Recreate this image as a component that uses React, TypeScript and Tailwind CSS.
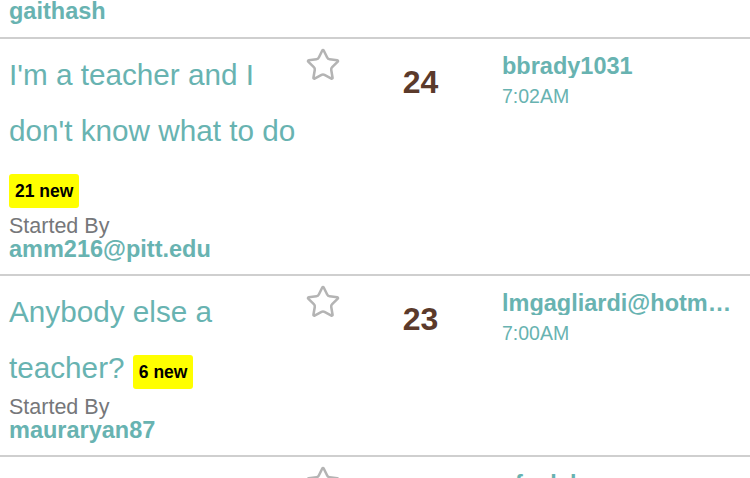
import React from 'react';
import { Star } from 'lucide-react';

type Topic = {
  title: string;
  fresh?: number;
  author: string;
  count?: number;
  lastUser: string;
  time?: string;
};

const topics: Topic[] = [
  {
    title: "I'm a teacher and I don't know what to do",
    fresh: 21,
    author: 'amm216@pitt.edu',
    count: 24,
    lastUser: 'bbrady1031',
    time: '7:02AM',
  },
  {
    title: 'Anybody else a teacher?',
    fresh: 6,
    author: 'mauraryan87',
    count: 23,
    lastUser: 'lmgagliardi@hotmail.com',
    time: '7:00AM',
  },
  {
    title: 'Teaching and working nights',
    author: 'jkline',
    count: 18,
    lastUser: 'afoxlake',
    time: '6:48AM',
  },
];

function TopicRow({ t }: { t: Topic }) {
  return (
    <div className="flex border-b-2 border-[#cfcfcf]">
      <div className="w-[304px] shrink-0 pl-[9px] pt-[8px] pb-[13px]">
        <div className="text-[29.7px] leading-[56px] text-[#68b3b1]">
          {t.title}{' '}
          {t.fresh ? (
            <span className="inline-block rounded-[3px] bg-[#ffff00] px-[6px] py-[6px] align-baseline text-[17.5px] font-bold leading-[22px] text-black">
              {t.fresh} new
            </span>
          ) : null}
        </div>
        <div className="text-[21.5px] leading-[23px] text-[#76777a]">Started By</div>
        <div className="text-[23.5px] font-bold leading-[23px] text-[#68b3b1]">{t.author}</div>
      </div>
      <div className="w-[62px] shrink-0 pt-[8px]">
        <Star className="ml-[1px]" size={36} strokeWidth={1.7} color="#b4b4b4" />
      </div>
      <div className="w-[109px] shrink-0 pt-[27px] text-center text-[32px] font-bold leading-[32px] text-[#5b3a2b]">
        {t.count}
      </div>
      <div className="min-w-0 flex-1 pl-[27px] pr-[16px] pt-[16px]">
        <div className="truncate text-[23.5px] font-bold leading-[23px] text-[#68b3b1]">{t.lastUser}</div>
        <div className="mt-[9px] text-[19.5px] leading-[19px] text-[#68b3b1]">{t.time}</div>
      </div>
    </div>
  );
}

export default function App() {
  return (
    <div className="h-[478px] w-[750px] overflow-hidden bg-white font-['Liberation_Sans',Arial,sans-serif]">
      <div className="h-[39px] overflow-hidden border-b-2 border-[#cfcfcf] pl-[9px]">
        <div className="text-[23.5px] font-bold leading-[22px] text-[#68b3b1]">gaithash</div>
      </div>
      {topics.map((t) => (
        <TopicRow key={t.author} t={t} />
      ))}
    </div>
  );
}
